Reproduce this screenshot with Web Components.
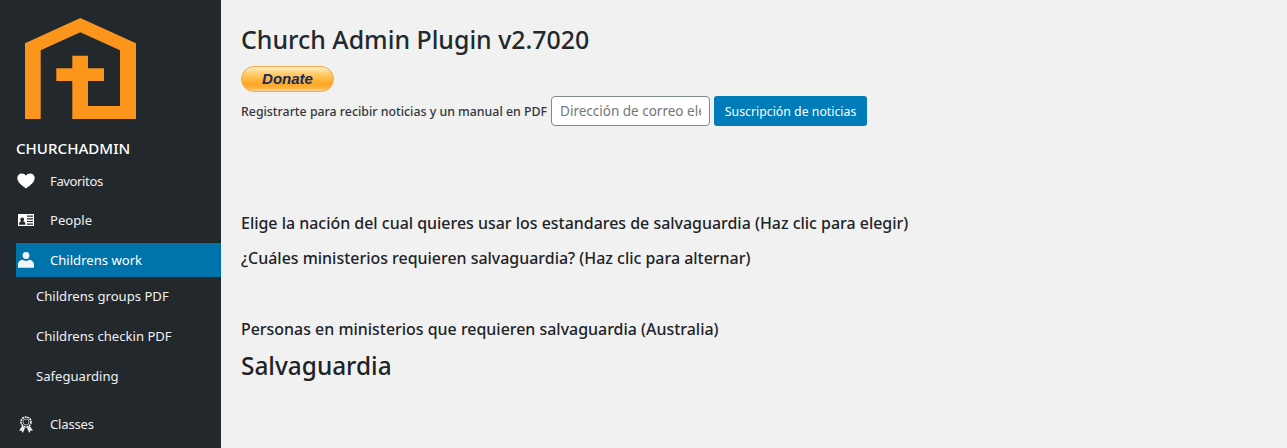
<!DOCTYPE html>
<html lang="es">
<head>
<meta charset="utf-8">
<title>Church Admin Plugin</title>
<style>
  html, body { margin: 0; height: 100%; overflow: hidden; background: #f1f1f1; }
  body { font-family: "Noto Sans", "Open Sans", sans-serif; display: flex; height: 448px; }
</style>
</head>
<body>
<ca-sidebar>
  <ca-menu-item icon="heart" style="--row-h:41px;--ls:-.4px">Favoritos</ca-menu-item>
  <ca-menu-item icon="card" style="--row-h:38px">People</ca-menu-item>
  <ca-menu-item icon="person" active style="--row-h:34px;--mt:4px">Childrens work</ca-menu-item>
  <ca-menu-item sub style="--row-h:38px">Childrens groups PDF</ca-menu-item>
  <ca-menu-item sub style="--row-h:42px">Childrens checkin PDF</ca-menu-item>
  <ca-menu-item sub style="--row-h:38px">Safeguarding</ca-menu-item>
  <ca-menu-item icon="award" style="--row-h:58px;--ls:-.2px">Classes</ca-menu-item>
</ca-sidebar>
<ca-main>
  <h1 slot="title">Church Admin Plugin v2.7020</h1>
  <ca-donate slot="donate"></ca-donate>
  <ca-newsletter slot="newsletter"></ca-newsletter>
  <ca-heading style="--mt:0">Elige la nación del cual quieres usar los estandares de salvaguardia (Haz clic para elegir)</ca-heading>
  <ca-heading style="--mt:13px">¿Cuáles ministerios requieren salvaguardia? (Haz clic para alternar)</ca-heading>
  <ca-heading style="--mt:49px">Personas en ministerios que requieren salvaguardia (Australia)</ca-heading>
  <ca-heading big style="--mt:8px">Salvaguardia</ca-heading>
</ca-main>

<script>
const ICONS = {
  heart: '<svg width="18" height="16" viewBox="0 0 18 16"><path fill="#fff" d="M9 15.500C5 12.300.3 9.400.3 5 .3 2.400 2.300.5 4.800.5c1.800 0 3.300.8 4.200 2.300C9.900 1.300 11.400.5 13.200.5c2.500 0 4.500 1.900 4.500 4.500 0 4.400-4.700 7.300-8.700 10.500z"/></svg>',
  card: '<svg width="16" height="12" viewBox="0 0 16 12"><path fill="#fff" d="M0 0h16v12H0z"/><path fill="#23282d" d="M1 10c.1-1.700 1.200-2.500 2.400-2.800-.7-.4-1.100-1.100-1.100-1.800 0-1 .8-1.900 1.900-1.900s1.900.9 1.900 1.900c0 .7-.4 1.400-1.100 1.800C6.200 7.500 7.300 8.300 7.400 10v.8H1zM9 1.500h6v1.200H9zM9 4.200h6v1.200H9zM9 6.900h6v1.200H9zM9 9.500h6v1.200H9z"/></svg>',
  person: '<svg width="16" height="16" viewBox="0 0 16 16"><circle fill="#f1f6fa" cx="8" cy="3.500" r="3.400"/><path fill="#f1f6fa" d="M0 15.700v-3.200C0 10.100 2.200 8 4.400 7.800c1 .7 2.200 1.100 3.600 1.100s2.600-.4 3.600-1.100C13.800 8 16 10.100 16 12.500v3.200z"/></svg>',
  award: '<svg width="14" height="17" viewBox="0 0 14 17"><path fill="#f1f1f1" d="M3.500 9.500 0 14.800l2.400-.3L3.700 17l2.300-5zM10.500 9.500l3.500 5.300-2.400-.3-1.300 2.500L8 12z"/><circle fill="none" stroke="#eee" stroke-width="1.600" stroke-dasharray="2 .7" cx="7" cy="6" r="5"/><circle fill="none" stroke="#a9a9a9" stroke-width="1" cx="7" cy="6" r="3"/></svg>'
};

class CaSidebar extends HTMLElement {
  connectedCallback() {
    this.attachShadow({ mode: 'open' });
    this.shadowRoot.innerHTML = `
      <style>
        :host {
          display: block;
          flex: none;
          width: 221px;
          height: 448px;
          overflow: hidden;
          background: #23282d;
          color: #f0f0f0;
        }
        .logo {
          display: block;
          margin: 18px 0 0 25px;
        }
        .name {
          margin: 17px 0 0 16px;
          height: 24px;
          font-size: 15.100px;
          line-height: 24px;
          font-weight: 500;
          color: #fff;
        }
        .menu {
          display: flex;
          flex-direction: column;
        }
      </style>
      <svg class="logo" width="111" height="101" viewBox="0 0 111 101">
        <path fill="#fb951c" d="M0 25.300 55.300 0 111 25.300V101H47.300V63H31.300V50.300H47.300V37.700H63V50.300H79V63H63V88H95V32.300L55.300 14.300 15.700 32.300V101H0z"/>
      </svg>
      <div class="name">CHURCHADMIN</div>
      <div class="menu"><slot></slot></div>
    `;
  }
}

class CaMenuItem extends HTMLElement {
  connectedCallback() {
    this.attachShadow({ mode: 'open' });
    const icon = ICONS[this.getAttribute('icon')] || '';
    this.shadowRoot.innerHTML = `
      <style>
        :host {
          display: flex;
          align-items: center;
          box-sizing: border-box;
          height: var(--row-h, 40px);
          margin: var(--mt, 0) 0 0 16px;
          font-size: 13.100px;
          letter-spacing: var(--ls, 0);
          color: #f0f0f0;
        }
        :host([active]) { background: #0073aa; color: #fff; }
        :host([sub]) { padding-left: 20px; }
        .icon {
          flex: none;
          display: flex;
          justify-content: center;
          width: 20px;
          margin-right: 14px;
        }
      </style>
      ${this.hasAttribute('sub') ? '' : `<span class="icon">${icon}</span>`}
      <slot></slot>
    `;
  }
}

class CaMain extends HTMLElement {
  connectedCallback() {
    this.attachShadow({ mode: 'open' });
    this.shadowRoot.innerHTML = `
      <style>
        :host {
          display: block;
          flex: 1;
          box-sizing: border-box;
          padding: 21px 0 0 20px;
          color: #23282d;
        }
        ::slotted(h1) {
          margin: 0 0 9px;
          font-size: 24.900px;
          line-height: 36px;
          font-weight: 500;
        }
        .rest { margin-top: 86px; }
      </style>
      <slot name="title"></slot>
      <slot name="donate"></slot>
      <slot name="newsletter"></slot>
      <div class="rest"><slot></slot></div>
    `;
  }
}

class CaDonate extends HTMLElement {
  connectedCallback() {
    this.attachShadow({ mode: 'open' });
    this.shadowRoot.innerHTML = `
      <style>
        :host {
          display: flex;
          align-items: center;
          justify-content: center;
          box-sizing: border-box;
          width: 93px;
          height: 26px;
          padding-bottom: 2px;
          border: 1px solid #f6a54a;
          border-radius: 13px;
          background: linear-gradient(#fff1cf 0%, #ffd27c 22%, #ffbb45 48%, #fda728 70%, #fcb23c 88%, #fedc9c 100%);
          font: italic bold 15px/1 "Liberation Sans", Arial, sans-serif;
          color: #14295f;
        }
      </style>
      <span>Donate</span>
    `;
  }
}

class CaNewsletter extends HTMLElement {
  connectedCallback() {
    this.attachShadow({ mode: 'open' });
    this.shadowRoot.innerHTML = `
      <style>
        :host {
          display: flex;
          align-items: center;
          margin-top: 4px;
          font-size: 12.350px;
          font-weight: 500;
          color: #32373c;
        }
        input {
          box-sizing: border-box;
          width: 159px;
          height: 30px;
          margin: 0 4px;
          padding: 0 8px;
          border: 1px solid #7e8993;
          border-radius: 4px;
          background: #fff;
          font: 400 13.500px "Noto Sans", sans-serif;
          color: #32373c;
        }
        input::placeholder { color: #72777c; opacity: 1; }
        button {
          width: 153px;
          height: 30px;
          padding: 0;
          border: 0;
          border-radius: 3px;
          background: #007cba;
          color: #fff;
          font: 400 12.300px "Noto Sans", sans-serif;
        }
      </style>
      <span>Registrarte para recibir noticias y un manual en PDF</span>
      <input type="text" placeholder="Dirección de correo electrónico">
      <button type="button">Suscripción de noticias</button>
    `;
  }
}

class CaHeading extends HTMLElement {
  connectedCallback() {
    this.attachShadow({ mode: 'open' });
    this.shadowRoot.innerHTML = `
      <style>
        :host {
          display: block;
          margin-top: var(--mt, 0);
          font-size: 15.950px;
          line-height: 22px;
          font-weight: 500;
          color: #1d2327;
        }
        :host([big]) {
          font-size: 24.400px;
          line-height: 36px;
        }
      </style>
      <slot></slot>
    `;
  }
}

customElements.define('ca-sidebar', CaSidebar);
customElements.define('ca-menu-item', CaMenuItem);
customElements.define('ca-main', CaMain);
customElements.define('ca-donate', CaDonate);
customElements.define('ca-newsletter', CaNewsletter);
customElements.define('ca-heading', CaHeading);
</script>
</body>
</html>
